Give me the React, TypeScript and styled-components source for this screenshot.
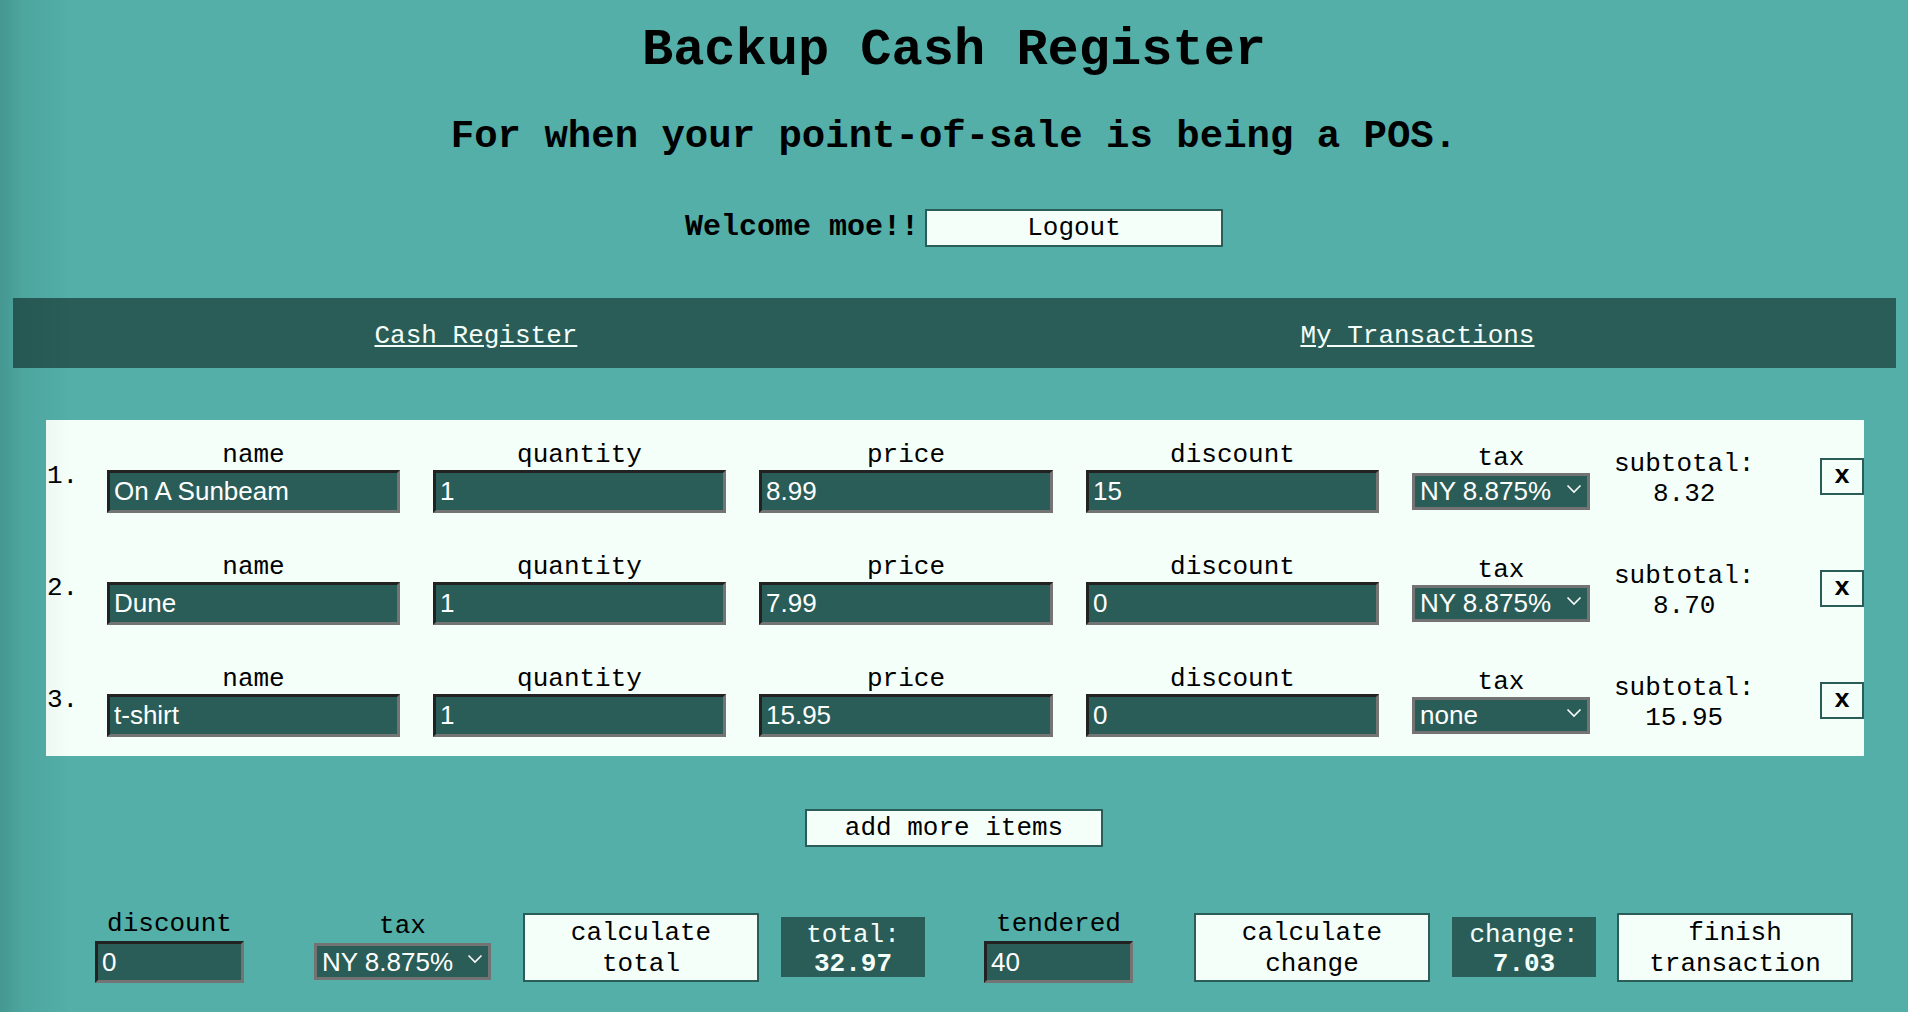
import React from 'react'
import styled, { createGlobalStyle, css } from 'styled-components'

const DARK = '#2a5d58'
const MINT = '#f5fffa'

const GlobalStyle = createGlobalStyle`
  html, body {
    margin: 0;
    padding: 0;
  }
  body {
    background: #53afa8;
    color: #000;
    font-family: "Liberation Mono", "Courier New", monospace;
  }
`

type Lead = { $lead?: number }

const leadCss = css<Lead>`
  margin-left: ${({ $lead }) => ($lead ?? 0)}px;
`

const Page = styled.div`
  min-height: 100vh;
  padding-bottom: 1px;
  box-sizing: border-box;
`

const Shade = styled.div`
  position: fixed;
  top: 0;
  left: 0;
  bottom: 0;
  width: 70px;
  pointer-events: none;
  background: linear-gradient(to right, rgba(0, 30, 30, 0.16), rgba(0, 30, 30, 0.06) 24px, rgba(0, 30, 30, 0) 70px);
`

const Title = styled.h1`
  margin: 0;
  padding-top: 21px;
  font-size: 52px;
  line-height: 60px;
  font-weight: bold;
  text-align: center;
`

const Subtitle = styled.h2`
  margin: 33px 0 0;
  font-size: 39px;
  line-height: 46px;
  font-weight: bold;
  text-align: center;
`

const WelcomeRow = styled.div`
  margin-top: 49px;
  display: flex;
  justify-content: center;
  align-items: baseline;
  gap: 6px;
`

const WelcomeText = styled.span`
  font-size: 30px;
  font-weight: bold;
`

const PlainButton = styled.button<{ $w: number }>`
  width: ${({ $w }) => $w}px;
  box-sizing: border-box;
  padding: 3px 0 2px;
  border: 2px solid ${DARK};
  background: ${MINT};
  color: #000;
  font-family: "Liberation Mono", "Courier New", monospace;
  font-size: 26px;
  line-height: 29px;
  cursor: pointer;
`

const Nav = styled.nav`
  margin: 51px 12px 0 13px;
  height: 70px;
  box-sizing: border-box;
  padding-top: 5px;
  background: ${DARK};
  display: flex;
  justify-content: space-around;
  align-items: center;
`

const NavLink = styled.a`
  color: ${MINT};
  font-size: 26px;
  text-decoration: underline;
`

const Card = styled.section`
  margin: 52px 44px 0 46px;
  background: ${MINT};
`

const ItemRow = styled.div`
  height: 112px;
  display: flex;
  align-items: center;
  gap: 33px;
`

const Num = styled.span`
  flex: 0 0 27px;
  min-width: 0;
  margin-left: 1px;
  font-size: 26px;
  white-space: nowrap;
`

const Field = styled.div<Lead & { $gap?: number }>`
  ${leadCss};
  display: flex;
  flex-direction: column;
  align-items: center;
  flex-shrink: 0;

  & > span {
    font-size: 26px;
    line-height: 30px;
    margin-bottom: ${({ $gap }) => ($gap ?? 0)}px;
  }
`

const TextInput = styled.input<{ $w: number; $h: number }>`
  width: ${({ $w }) => $w}px;
  height: ${({ $h }) => $h}px;
  box-sizing: border-box;
  margin: 0;
  padding: 0 4px;
  border-style: solid;
  border-width: 3px;
  border-color: #222 #747474 #747474 #222;
  background: ${DARK};
  color: #fff;
  font-family: "Liberation Sans", Arial, sans-serif;
  font-size: 26px;
  outline: none;
`

const SelectBox = styled.div<{ $w: number }>`
  position: relative;
  width: ${({ $w }) => $w}px;
  height: 37px;
`

const Select = styled.select`
  appearance: none;
  width: 100%;
  height: 100%;
  box-sizing: border-box;
  margin: 0;
  padding: 0 0 0 5px;
  border: 3px solid #737373;
  border-radius: 0;
  background: ${DARK};
  color: #fff;
  font-family: "Liberation Sans", Arial, sans-serif;
  font-size: 26px;
  outline: none;
`

const Chevron = styled.svg`
  position: absolute;
  right: 8px;
  top: 11px;
  pointer-events: none;
`

const Subtotal = styled.div`
  margin-left: -9px;
  padding-top: 5px;
  font-size: 26px;
  line-height: 30px;
  text-align: center;
  white-space: nowrap;
`

const RemoveButton = styled.button`
  margin-left: auto;
  width: 44px;
  height: 37px;
  box-sizing: border-box;
  padding: 0;
  border: 2px solid ${DARK};
  background: ${MINT};
  color: #000;
  font-family: "Liberation Mono", "Courier New", monospace;
  font-size: 26px;
  font-weight: bold;
  cursor: pointer;
`

const AddRow = styled.div`
  margin-top: 53px;
  display: flex;
  justify-content: center;
`

const Footer = styled.div`
  margin-top: 62px;
  padding-left: 95px;
  display: flex;
  align-items: last baseline;
`

const ActionButton = styled.button<Lead>`
  ${leadCss};
  flex-shrink: 0;
  width: 236px;
  box-sizing: border-box;
  padding: 3px 8px 0;
  border: 2px solid ${DARK};
  background: ${MINT};
  color: #000;
  font-family: "Liberation Mono", "Courier New", monospace;
  font-size: 26px;
  line-height: 31px;
  cursor: pointer;
`

const ResultBox = styled.div<Lead>`
  ${leadCss};
  flex-shrink: 0;
  width: 144px;
  height: 60px;
  box-sizing: border-box;
  padding-top: 4px;
  background: ${DARK};
  color: ${MINT};
  font-size: 26px;
  line-height: 29px;
  text-align: center;

  b {
    display: block;
  }
`

const TAX_OPTIONS = ['none', 'NY 8.875%']

const TaxSelect: React.FC<{ value: string; width: number }> = ({ value, width }) => (
  <SelectBox $w={width}>
    <Select defaultValue={value}>
      {TAX_OPTIONS.map(o => (
        <option key={o} value={o}>{o}</option>
      ))}
    </Select>
    <Chevron width="16" height="10" viewBox="0 0 16 10">
      <polyline points="1.5,1.5 8,8 14.5,1.5" fill="none" stroke="#fff" strokeWidth="1.6" />
    </Chevron>
  </SelectBox>
)

type Item = {
  name: string;
  quantity: string;
  price: string;
  discount: string;
  tax: string;
  subtotal: string;
}

const items: Item[] = [
  { name: 'On A Sunbeam', quantity: '1', price: '8.99', discount: '15', tax: 'NY 8.875%', subtotal: '8.32' },
  { name: 'Dune', quantity: '1', price: '7.99', discount: '0', tax: 'NY 8.875%', subtotal: '8.70' },
  { name: 't-shirt', quantity: '1', price: '15.95', discount: '0', tax: 'none', subtotal: '15.95' },
]

const App: React.FC = () => {
  return (
    <Page>
      <GlobalStyle />
      <Title>Backup Cash Register</Title>
      <Subtitle>For when your point-of-sale is being a POS.</Subtitle>

      <WelcomeRow>
        <WelcomeText>Welcome moe!!</WelcomeText>
        <PlainButton $w={298}>Logout</PlainButton>
      </WelcomeRow>

      <Nav>
        <NavLink href="#">Cash Register</NavLink>
        <NavLink href="#">My Transactions</NavLink>
      </Nav>

      <Card>
        {items.map((item, i) => (
          <ItemRow key={i}>
            <Num>{i + 1}.</Num>
            <Field>
              <span>name</span>
              <TextInput $w={293} $h={43} defaultValue={item.name} />
            </Field>
            <Field>
              <span>quantity</span>
              <TextInput $w={293} $h={43} defaultValue={item.quantity} />
            </Field>
            <Field>
              <span>price</span>
              <TextInput $w={294} $h={43} defaultValue={item.price} />
            </Field>
            <Field>
              <span>discount</span>
              <TextInput $w={293} $h={43} defaultValue={item.discount} />
            </Field>
            <Field>
              <span>tax</span>
              <TaxSelect value={item.tax} width={178} />
            </Field>
            <Subtotal>
              subtotal:
              <br />
              {item.subtotal}
            </Subtotal>
            <RemoveButton>x</RemoveButton>
          </ItemRow>
        ))}
      </Card>

      <AddRow>
        <PlainButton $w={298}>add more items</PlainButton>
      </AddRow>

      <Footer>
        <Field $gap={2}>
          <span>discount</span>
          <TextInput $w={149} $h={42} defaultValue="0" />
        </Field>
        <Field $lead={70} $gap={2}>
          <span>tax</span>
          <TaxSelect value="NY 8.875%" width={177} />
        </Field>
        <ActionButton $lead={32}>calculate total</ActionButton>
        <ResultBox $lead={22}>
          total:
          <b>32.97</b>
        </ResultBox>
        <Field $lead={59} $gap={2}>
          <span>tendered</span>
          <TextInput $w={149} $h={42} defaultValue="40" />
        </Field>
        <ActionButton $lead={61}>calculate change</ActionButton>
        <ResultBox $lead={22}>
          change:
          <b>7.03</b>
        </ResultBox>
        <ActionButton $lead={21}>finish transaction</ActionButton>
      </Footer>

      <Shade />
    </Page>
  )
}

export default App
